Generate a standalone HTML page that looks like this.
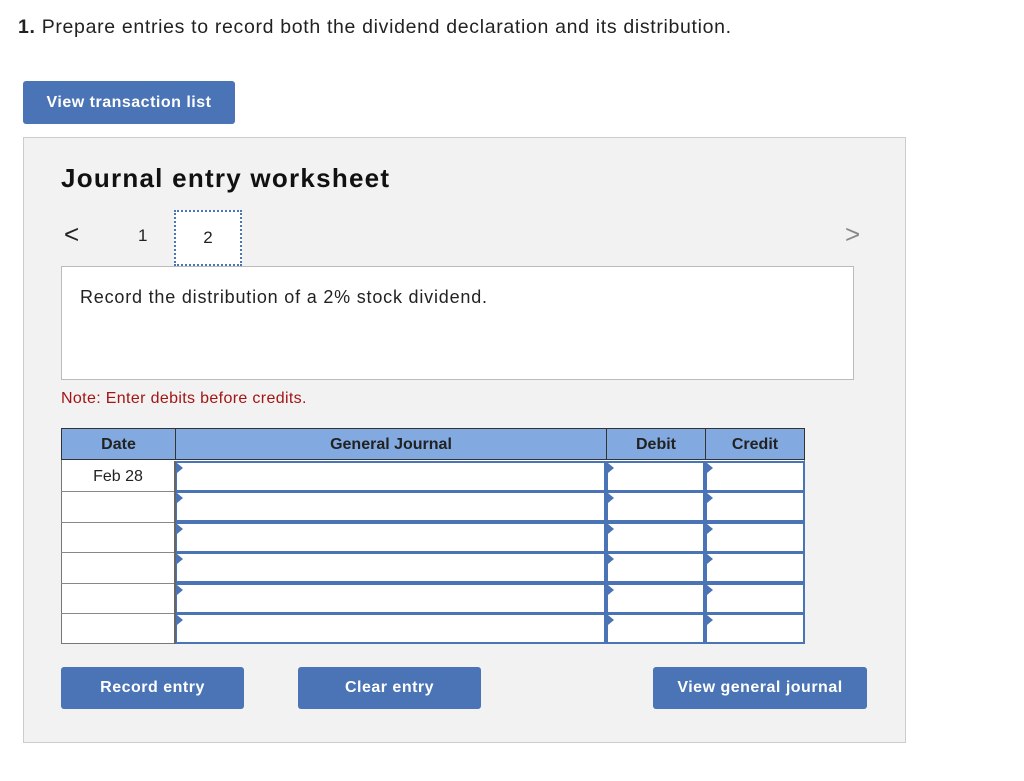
<!DOCTYPE html><html><head><style>
body{margin:0;width:1024px;height:781px;background:#fff;font-family:"Liberation Sans",sans-serif;position:relative;overflow:hidden}
.a{position:absolute}
.btn{position:absolute;background:#4a74b5;color:#fff;font-weight:bold;font-size:16px;text-align:center;border-radius:3px;letter-spacing:0.5px}
.cell{position:absolute;background:#fff;box-sizing:border-box;border:2px solid #4a74b5}
.tri{position:absolute;left:0;top:0;width:0;height:0;border-top:5px solid transparent;border-bottom:5px solid transparent;border-left:6px solid #4a74b5}
.hd{position:absolute;top:428px;height:32px;line-height:32px;background:#82aae0;font-weight:bold;font-size:16px;text-align:center;color:#222;box-sizing:border-box;border:1px solid #333}
</style></head><body>
<div class="a" style="left:18px;top:16px;font-size:19.5px;color:#222;letter-spacing:0.67px"><b>1.</b> Prepare entries to record both the dividend declaration and its distribution.</div>
<div class="btn" style="left:23px;top:81px;width:212px;height:43px;line-height:43px">View transaction list</div>
<div class="a" style="left:23px;top:137px;width:881px;height:604px;background:#f2f2f2;border:1px solid #ccc"></div>
<div class="a" style="left:61px;top:163px;font-size:26px;font-weight:bold;color:#111;letter-spacing:1.25px">Journal entry worksheet</div>
<div class="a" style="left:64px;top:219px;font-size:26px;color:#222">&lt;</div>
<div class="a" style="left:138px;top:226px;font-size:17px;color:#222">1</div>
<div class="a" style="left:174px;top:210px;width:68px;height:56px;background:#fff;border:2px dotted #4a74b5;box-sizing:border-box;text-align:center;line-height:52px;font-size:17px;color:#222">2</div>
<div class="a" style="left:845px;top:219px;font-size:26px;color:#888">&gt;</div>
<div class="a" style="left:61px;top:266px;width:791px;height:112px;background:#fff;border:1px solid #bbb"></div>
<div class="a" style="left:80px;top:287px;font-size:18px;color:#222;letter-spacing:0.8px">Record the distribution of a 2% stock dividend.</div>
<div class="a" style="left:61px;top:390px;font-size:16px;color:#a31515;letter-spacing:0.35px">Note: Enter debits before credits.</div>
<div class="a" style="left:61px;top:428px;width:744px;height:216px;background:#fff;border:1px solid #777;box-sizing:border-box"></div>
<div class="hd" style="left:61px;width:115px">Date</div>
<div class="hd" style="left:175px;width:432px">General Journal</div>
<div class="hd" style="left:606px;width:100px">Debit</div>
<div class="hd" style="left:705px;width:100px">Credit</div>
<div class="a" style="left:61px;top:462px;width:114px;height:30px;line-height:30px;text-align:center;font-size:16px;color:#222">Feb 28</div>
<div id="rows"></div>
<script>
var tops=[461,491,522,552,583,613],h="";
tops.forEach(function(t,i){
 if(i>0)h+='<div class="a" style="left:61px;top:'+t+'px;width:114px;height:1px;background:#888"></div>';
 [[175,431],[606,99],[705,100]].forEach(function(c){
  h+='<div class="cell" style="left:'+c[0]+'px;top:'+t+'px;width:'+c[1]+'px;height:31px"><div class="tri"></div></div>';
 });
});
h+='<div class="a" style="left:174px;top:461px;width:2px;height:183px;background:#666"></div>';
document.getElementById('rows').innerHTML=h;
</script>
<div class="btn" style="left:61px;top:667px;width:183px;height:42px;line-height:42px">Record entry</div>
<div class="btn" style="left:298px;top:667px;width:183px;height:42px;line-height:42px">Clear entry</div>
<div class="btn" style="left:653px;top:667px;width:214px;height:42px;line-height:42px">View general journal</div>
</body></html>
